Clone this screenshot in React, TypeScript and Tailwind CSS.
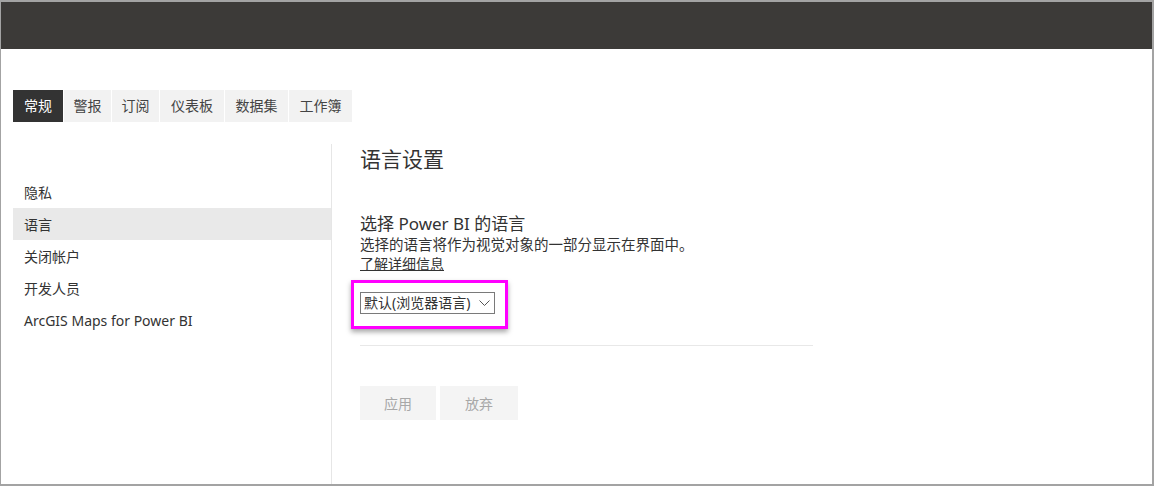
import * as React from "react";

const tabs = [
  { label: "常规", w: "w-[50px]" },
  { label: "警报", w: "w-[47px]" },
  { label: "订阅", w: "w-[47px]" },
  { label: "仪表板", w: "w-[64px]" },
  { label: "数据集", w: "w-[63px]" },
  { label: "工作簿", w: "w-[63px]" },
];
const sideItems = ["隐私", "语言", "关闭帐户", "开发人员", "ArcGIS Maps for Power BI"];

const font = "font-['Noto_Sans','Noto_Sans_CJK_SC',sans-serif]";

export default function App() {
  return (
    <div
      className={`w-[1154px] h-[486px] overflow-hidden bg-white border-t-2 border-l border-r-2 border-b-2 border-[#a3a3a3] flex flex-col ${font}`}
    >
      <div className="h-[47px] shrink-0 bg-[#3c3a38]" />

      {/* tabs */}
      <div className="mt-[41px] ml-[12px] flex gap-px h-8">
        {tabs.map((t, i) => (
          <div
            key={t.label}
            className={`${t.w} flex items-center justify-center text-[14px] leading-none ${
              i === 0 ? "bg-[#333333] text-white" : "bg-[#f2f2f2] text-[#444444]"
            }`}
          >
            {t.label}
          </div>
        ))}
      </div>

      <div className="mt-[22px] flex flex-1">
        {/* sidebar */}
        <div className="w-[331px] shrink-0 border-r border-[#e6e6e6] pt-8 pl-[12px]">
          {sideItems.map((s, i) => (
            <div
              key={s}
              className={`h-8 flex items-center pl-[11px] text-[14px] text-[#333333] ${
                i === 1 ? "bg-[#e9e9e9]" : ""
              }`}
            >
              {s}
            </div>
          ))}
        </div>

        {/* content */}
        <div className="pl-[28px] pt-[1px] flex flex-col">
          <div className="text-[21px] leading-[29px] text-[#333333]">语言设置</div>

          <div className="mt-[39px] text-[17px] leading-[22px] text-[#333333]">
            选择 Power BI 的语言
          </div>
          <div className="text-[14.5px] leading-[19px] text-[#333333]">
            选择的语言将作为视觉对象的一部分显示在界面中。
          </div>
          <a className="text-[14px] leading-[19px] text-[#333333] underline w-fit">
            了解详细信息
          </a>

          <div className="mt-[7px] -ml-[9px] w-[157px] h-[49px] border-[3px] border-[#ff00ff] shadow-[0_3px_5px_rgba(0,0,0,0.35)] pl-[6px] pt-[9px]">
            <div className="w-[135px] h-[22px] border border-[#7a7a7a] flex items-center pl-[3px] pr-[4px] justify-between text-[14px] text-[#333333]">
              <span className="leading-none">默认(浏览器语言)</span>
              <svg width="11" height="7" viewBox="0 0 11 7" fill="none">
                <path d="M0.5 0.5 L5.5 5.5 L10.5 0.5" stroke="#555555" strokeWidth="1" />
              </svg>
            </div>
          </div>

          <div className="mt-[16px] w-[453px] h-px bg-[#e8e8e8]" />

          <div className="mt-[40px] flex gap-[4px]">
            <div className="w-[76px] h-[34px] bg-[#f4f4f4] text-[#a8a8a8] text-[14px] flex items-center justify-center">
              应用
            </div>
            <div className="w-[78px] h-[34px] bg-[#f4f4f4] text-[#a8a8a8] text-[14px] flex items-center justify-center">
              放弃
            </div>
          </div>
        </div>
      </div>
    </div>
  );
}
